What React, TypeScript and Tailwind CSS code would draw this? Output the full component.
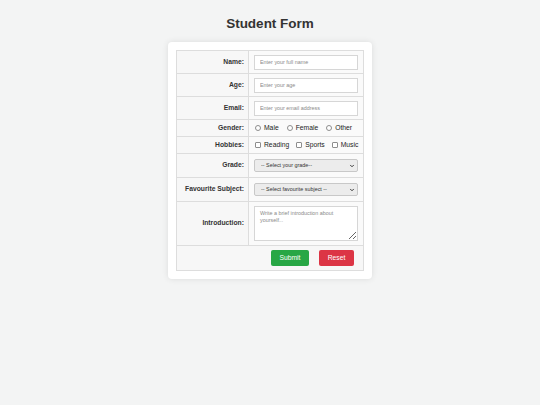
import { ChevronDown } from 'lucide-react'

const labelCell =
  'border border-[#ddd] bg-[#f7f7f7] text-right align-middle pr-[4px] text-[6.75px] font-bold text-[#333] whitespace-nowrap'
const fieldCell = 'border border-[#ddd] bg-[#fafafa] align-middle px-[5px]'
const textInput =
  'block w-full h-[15px] border border-[#d6d6d6] bg-white px-[5px] text-[5.4px] text-[#333] placeholder:text-[#8a8a8a] outline-none'

function SelectBox({ placeholder }: { placeholder: string }) {
  return (
    <div className="relative">
      <select
        defaultValue=""
        className="block w-full h-[13.5px] appearance-none border border-[#c8c8c8] rounded-[2px] bg-[#ececec] pl-[6px] text-[5.4px] text-[#333] outline-none"
      >
        <option value="">{placeholder}</option>
      </select>
      <ChevronDown
        className="pointer-events-none absolute right-[3px] top-[4px] w-[6px] h-[6px] text-[#222]"
        strokeWidth={3.5}
      />
    </div>
  )
}

function Choice({ type, name, label }: { type: 'radio' | 'checkbox'; name: string; label: string }) {
  return (
    <label className="flex items-center gap-[3px]">
      <input
        type={type}
        name={name}
        className={`appearance-none m-0 w-[6px] h-[6px] border border-[#8d8d8d] bg-white ${
          type === 'radio' ? 'rounded-full' : 'rounded-[1px]'
        }`}
      />
      <span className="text-[6.75px] text-[#222]">{label}</span>
    </label>
  )
}

export default function App() {
  return (
    <div className="min-h-screen bg-[#f3f4f4] pt-[16px] font-['Liberation_Sans',Arial,sans-serif]">
      <h1 className="text-center text-[13.5px] leading-[16px] font-bold text-[#333] mb-[10px]">
        Student Form
      </h1>

      <div className="mx-auto w-[204px] bg-white rounded-[4px] p-[8px] shadow-[0_0_6px_rgba(0,0,0,0.1)]">
        <form onSubmit={e => e.preventDefault()}>
          <table className="w-[188px] border-collapse border border-[#ddd] table-fixed">
            <colgroup>
              <col className="w-[72px]" />
              <col />
            </colgroup>
            <tbody>
              <tr className="h-[23px]">
                <td className={labelCell}>Name:</td>
                <td className={fieldCell}>
                  <input className={textInput} placeholder="Enter your full name" />
                </td>
              </tr>
              <tr className="h-[23px]">
                <td className={labelCell}>Age:</td>
                <td className={fieldCell}>
                  <input className={textInput} placeholder="Enter your age" />
                </td>
              </tr>
              <tr className="h-[23px]">
                <td className={labelCell}>Email:</td>
                <td className={fieldCell}>
                  <input className={textInput} placeholder="Enter your email address" />
                </td>
              </tr>
              <tr className="h-[17px]">
                <td className={labelCell}>Gender:</td>
                <td className={`${fieldCell} pl-[6px]`}>
                  <div className="flex items-center gap-[8px]">
                    <Choice type="radio" name="gender" label="Male" />
                    <Choice type="radio" name="gender" label="Female" />
                    <Choice type="radio" name="gender" label="Other" />
                  </div>
                </td>
              </tr>
              <tr className="h-[17px]">
                <td className={labelCell}>Hobbies:</td>
                <td className={`${fieldCell} pl-[6px] pr-0`}>
                  <div className="flex items-center gap-[7px] whitespace-nowrap">
                    <Choice type="checkbox" name="reading" label="Reading" />
                    <Choice type="checkbox" name="sports" label="Sports" />
                    <Choice type="checkbox" name="music" label="Music" />
                  </div>
                </td>
              </tr>
              <tr className="h-[24px]">
                <td className={labelCell}>Grade:</td>
                <td className={fieldCell}>
                  <SelectBox placeholder="-- Select your grade--" />
                </td>
              </tr>
              <tr className="h-[24px]">
                <td className={labelCell}>Favourite Subject:</td>
                <td className={fieldCell}>
                  <SelectBox placeholder="-- Select favourite subject --" />
                </td>
              </tr>
              <tr className="h-[44px]">
                <td className={labelCell}>Introduction:</td>
                <td className={fieldCell}>
                  <textarea
                    className="block w-full h-[35px] border border-[#d6d6d6] bg-white px-[5px] py-[3px] text-[5.4px] leading-[7px] text-[#333] placeholder:text-[#8a8a8a] outline-none resize-y"
                    placeholder="Write a brief introduction about yourself..."
                  />
                </td>
              </tr>
              <tr className="h-[25px]">
                <td colSpan={2} className="border border-[#ddd] bg-[#f7f7f7] pr-[9px]">
                  <div className="flex justify-end gap-[10px]">
                    <button
                      type="submit"
                      className="w-[38px] h-[16px] rounded-[2px] bg-[#28a745] text-white text-[6.75px]"
                    >
                      Submit
                    </button>
                    <button
                      type="reset"
                      className="w-[35px] h-[16px] rounded-[2px] bg-[#dc3545] text-white text-[6.75px]"
                    >
                      Reset
                    </button>
                  </div>
                </td>
              </tr>
            </tbody>
          </table>
        </form>
      </div>
    </div>
  )
}
